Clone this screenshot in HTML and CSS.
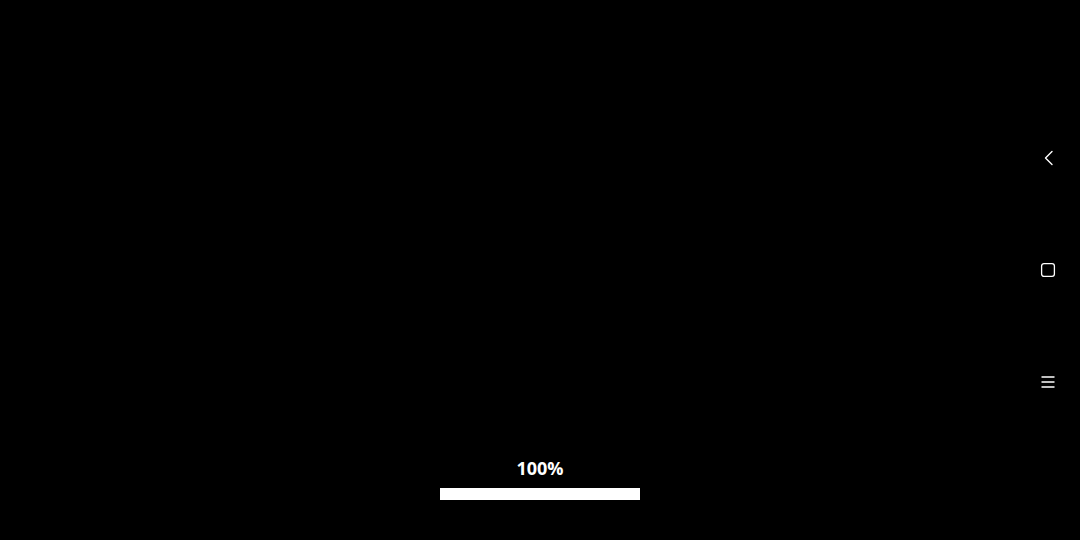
FILE: index.html
```html
<!DOCTYPE html>
<html>
<head>
<meta charset="utf-8">
<link rel="stylesheet" href="styles.css">
</head>
<body>
<div class="screen">
  <div class="loader">
    <div class="percent">100%</div>
    <div class="bar"><div class="fill" style="width:100%"></div></div>
  </div>
  <nav class="nav">
    <div class="nav-item">
      <svg width="16" height="16" viewBox="0 0 16 16"><path d="M12 1.5 L5.5 8 L12 14.5" fill="none" stroke="#fff" stroke-width="1.4" stroke-linecap="round" stroke-linejoin="round"/></svg>
    </div>
    <div class="nav-item">
      <svg width="16" height="16" viewBox="0 0 16 16"><rect x="1.6" y="1.6" width="12.8" height="12.8" rx="2.4" fill="none" stroke="#fff" stroke-width="1.3"/></svg>
    </div>
    <div class="nav-item">
      <svg width="16" height="16" viewBox="0 0 16 16"><path d="M1.5 3 H14.5 M1.5 8 H14.5 M1.5 13 H14.5" fill="none" stroke="#fff" stroke-width="1.3"/></svg>
    </div>
  </nav>
</div>
</body>
</html>
```
FILE: styles.css
```css
html, body {
  margin: 0;
  padding: 0;
  background: #000;
}
.screen {
  width: 1080px;
  height: 540px;
  display: grid;
  grid-template: 1fr / 1fr;
  background: #000;
  overflow: hidden;
}
.loader {
  grid-area: 1 / 1;
  align-self: end;
  justify-self: center;
  display: flex;
  flex-direction: column;
  align-items: center;
  padding-bottom: 40px;
}
.percent {
  font-family: "Open Sans", "Noto Sans", sans-serif;
  font-weight: 700;
  font-size: 18px;
  line-height: 24px;
  color: #fff;
  margin-bottom: 8px;
}
.bar {
  width: 200px;
  height: 12px;
  background: #333;
}
.fill {
  height: 100%;
  background: #fff;
}
.nav {
  grid-area: 1 / 1;
  justify-self: end;
  align-self: center;
  width: 64px;
  display: flex;
  flex-direction: column;
}
.nav-item {
  height: 112px;
  display: flex;
  align-items: center;
  justify-content: center;
}
.nav-item svg {
  display: block;
}
```
